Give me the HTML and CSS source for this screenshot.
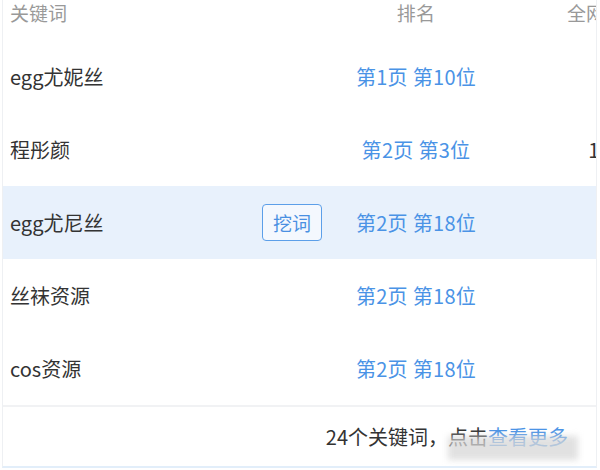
FILE: index.html
```html
<!DOCTYPE html>
<html>
<head>
    <title>关键词排名</title>
    <link rel="stylesheet" href="styles.css">
</head>
<body>
    <div class="panel">
        <div class="row head">
            <div class="kw">关键词</div>
            <div class="rank">排名</div>
            <div class="all">全网排名</div>
        </div>
        <div class="row">
            <div class="kw">egg尤妮丝</div>
            <div class="rank">第1页 第10位</div>
            <div class="all"></div>
        </div>
        <div class="row">
            <div class="kw">程彤颜</div>
            <div class="rank">第2页 第3位</div>
            <div class="all">125</div>
        </div>
        <div class="row active">
            <div class="kw">egg尤尼丝 <button class="dig">挖词</button></div>
            <div class="rank">第2页 第18位</div>
            <div class="all"></div>
        </div>
        <div class="row">
            <div class="kw">丝袜资源</div>
            <div class="rank">第2页 第18位</div>
            <div class="all"></div>
        </div>
        <div class="row">
            <div class="kw">cos资源</div>
            <div class="rank">第2页 第18位</div>
            <div class="all"></div>
        </div>
        <div class="foot">
            24个关键词，点击<a href="#" class="more">查看更多</a>
            <span class="mark"></span>
        </div>
    </div>
</body>
</html>
```

FILE: styles.css
```css
body {
    margin: 0;
    font-family: "Noto Sans CJK SC", "Noto Sans", sans-serif;
    background: #fff;
}
.panel {
    position: relative;
    margin-left: 2px;
    width: 593px;
    height: 466px;
    border-left: 1px solid #eef0f3;
    border-right: 1px solid #eef0f3;
    border-bottom: 2px solid #e2eefa;
    overflow: hidden;
}
.row {
    display: grid;
    grid-template-columns: 338px 150px 228px;
    align-items: center;
    height: 73px;
    font-size: 20px;
    color: #333;
}
.row.head {
    height: 40px;
    align-items: start;
    line-height: 26px;
    font-size: 19px;
    color: #999;
}
.row.active {
    background-color: #e8f1fc;
}
.kw {
    display: flex;
    align-items: center;
    justify-content: space-between;
    padding: 0 19px 0 7px;
    white-space: nowrap;
}
.rank {
    text-align: center;
    white-space: nowrap;
    letter-spacing: 0.3px;
}
.row .rank {
    color: #4a93e6;
}
.row.head .rank {
    color: #999;
}
.all {
    text-align: center;
    white-space: nowrap;
}
.dig {
    width: 60px;
    height: 37px;
    padding: 0;
    border: 1.5px solid #5c9fe9;
    border-radius: 4px;
    background: #f4f8fe;
    color: #4a90e2;
    font-family: inherit;
    font-size: 19px;
    cursor: pointer;
}
.foot {
    height: 59px;
    border-top: 2px solid #f1f2f4;
    display: flex;
    align-items: center;
    justify-content: flex-end;
    padding-right: 28px;
    font-size: 20px;
    color: #333;
}
.more {
    color: #4a93e6;
    text-decoration: none;
}
.mark {
    position: absolute;
    left: 445px;
    bottom: 6px;
    width: 130px;
    height: 24px;
    background: rgba(215, 215, 215, 0.75);
    filter: blur(3px);
}
```
